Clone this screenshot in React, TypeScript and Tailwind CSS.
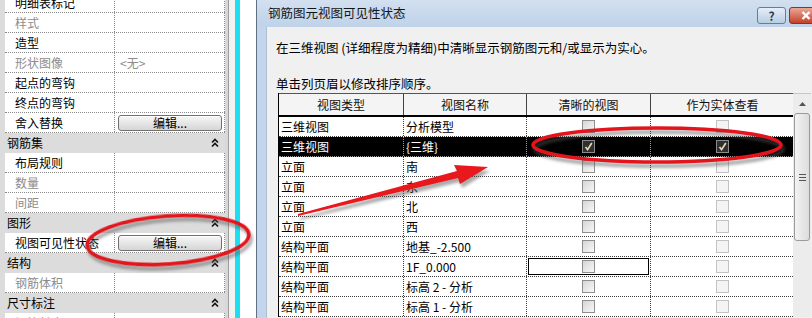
import React from 'react';

type LeftRow = { label: string; head?: boolean; gray?: boolean; value?: string; button?: boolean };

const LEFT_ROWS: LeftRow[] = [
  { label: '明细表标记' },
  { label: '样式', gray: true },
  { label: '造型' },
  { label: '形状图像', gray: true, value: '<无>' },
  { label: '起点的弯钩' },
  { label: '终点的弯钩' },
  { label: '舍入替换', button: true },
  { label: '钢筋集', head: true },
  { label: '布局规则' },
  { label: '数量', gray: true },
  { label: '间距', gray: true },
  { label: '图形', head: true },
  { label: '视图可见性状态', button: true },
  { label: '结构', head: true },
  { label: '钢筋体积', gray: true },
  { label: '尺寸标注', head: true },
  { label: '钢筋长度', gray: true },
];

const VIEWS: [string, string][] = [
  ['三维视图', '分析模型'],
  ['三维视图', '{三维}'],
  ['立面', '南'],
  ['立面', '东'],
  ['立面', '北'],
  ['立面', '西'],
  ['结构平面', '地基_-2.500'],
  ['结构平面', '1F_0.000'],
  ['结构平面', '标高 2 - 分析'],
  ['结构平面', '标高 1 - 分析'],
];

const DoubleCaret = () => (
  <svg width="8" height="10" viewBox="0 0 8 10">
    <path d="M1 4.5 L4 1.5 L7 4.5 M1 8.5 L4 5.5 L7 8.5" stroke="#111" strokeWidth="1.6" fill="none" />
  </svg>
);

const EditButton = () => (
  <div className="ml-[3px] mr-[2px] h-[16px] flex-1 rounded-[3px] border border-[#707070] bg-linear-to-b from-[#f7f7f7] to-[#d6d6d6] shadow-[inset_0_1px_0_#fff] flex items-center justify-center text-[12px] leading-none text-black">
    编辑...
  </div>
);

const Check = ({ on, dim }: { on?: boolean; dim?: boolean }) => (
  <div
    className={`w-[13px] h-[13px] border flex items-center justify-center ${
      on
        ? 'bg-[#2f2f2f] border-[#8c8c8c]'
        : dim
        ? 'bg-[#f4f4f4] border-[#c2c2c2]'
        : 'bg-linear-to-br from-[#d6d6d6] to-[#f8f8f8] border-[#8e8e8e]'
    }`}
  >
    {on && (
      <svg width="11" height="11" viewBox="0 0 11 11">
        <path d="M2.5 6 L4.6 8.6 L8.8 2" stroke="#e8d9b2" strokeWidth="1.7" fill="none" />
      </svg>
    )}
  </div>
);

const PropertiesPanel = () => (
  <div className="flex w-[240px] h-full shrink-0">
    <div className="w-[5px] bg-[#dcdcdc]" />
    <div className="w-[220px] -mt-[7px] flex flex-col">
      {LEFT_ROWS.map((r, i) =>
        r.head ? (
          <div key={i} className="h-[20px] shrink-0 bg-[#dcdcdc] flex items-center justify-between pl-[2px] pr-[6px] text-[12px] text-black">
            <span>{r.label}</span>
            <DoubleCaret />
          </div>
        ) : (
          <div key={i} className="h-[20px] shrink-0 flex border-b border-dotted border-[#8a8a8a] bg-white text-[12px]">
            <div className={`w-[110px] pl-[10px] flex items-center border-r border-dotted border-[#8a8a8a] ${r.gray ? 'text-[#8c8c8c]' : 'text-black'}`}>
              {r.label}
            </div>
            <div className="w-[110px] flex items-center border-r border-dotted border-[#8a8a8a] text-[#8c8c8c]">
              {r.button ? <EditButton /> : r.value ? <span className="pl-[5px]">{r.value}</span> : null}
            </div>
          </div>
        )
      )}
    </div>
    <div className="w-[3px] bg-[#d8d8d8]" />
    <div className="w-[1px] bg-[#9c9c9c]" />
    <div className="w-[6px] bg-[#f2f2f2]" />
    <div className="w-[5px] bg-[#1ce0f2]" />
  </div>
);

const Table = () => (
  <div className="flex">
    <div className="w-[515px] flex flex-col border-l border-black">
      <div className="grid grid-cols-[125px_123px_124px_143px] h-[24px] shrink-0 bg-[#f4f4f4] border-t border-[#555] border-b-2 border-b-black text-[12px] text-[#111]">
        {['视图类型', '视图名称', '清晰的视图', '作为实体查看'].map((h, i) => (
          <div key={h} className={`flex items-center justify-center ${i < 3 ? 'border-r border-[#444]' : ''}`}>
            {h}
          </div>
        ))}
      </div>
      {VIEWS.map(([type, name], i) => {
        const sel = i === 1;
        const line = sel ? 'border-[#9a9a9a]' : 'border-[#3a3a3a]';
        return (
          <div
            key={i}
            className={`grid grid-cols-[125px_123px_124px_143px] h-[20px] shrink-0 border-b border-dotted text-[12px] ${line} ${
              sel ? 'bg-black text-white' : 'bg-white text-black'
            }`}
          >
            <div className={`pl-[2px] flex items-center border-r border-dotted ${line}`}>{type}</div>
            <div className={`pl-[2px] flex items-center border-r border-dotted ${line}`}>{name}</div>
            <div className={`flex items-center justify-center border-r border-dotted ${line}`}>
              {i === 7 ? (
                <div className="m-[1px] w-full h-[17px] border border-black flex items-center justify-center">
                  <Check />
                </div>
              ) : (
                <Check on={sel} />
              )}
            </div>
            <div className={`flex items-center justify-center border-r border-dotted ${line}`}>
              <Check on={sel} dim={!sel} />
            </div>
          </div>
        );
      })}
    </div>
    <div className="w-[18px] flex flex-col bg-[#ececec] border-t border-[#c8c8c8]">
      <div className="h-[19px] flex items-center justify-center">
        <svg width="7" height="4" viewBox="0 0 7 4">
          <path d="M0 4 L3.5 0 L7 4 Z" fill="#555" />
        </svg>
      </div>
      <div className="mx-[1px] h-[128px] rounded-[3px] border border-[#9a9a9a] bg-linear-to-r from-[#f3f3f3] to-[#dcdcdc] flex items-center justify-center">
        <div className="flex flex-col gap-[2px]">
          <div className="w-[7px] h-[1px] bg-[#555]" />
          <div className="w-[7px] h-[1px] bg-[#555]" />
          <div className="w-[7px] h-[1px] bg-[#555]" />
        </div>
      </div>
    </div>
  </div>
);

const Dialog = () => (
  <div className="ml-[16px] w-[570px] shrink-0 h-full flex flex-col border-l border-[#5f6f84] bg-[#c3d5ea]">
    <div className="h-[27px] shrink-0 flex items-center justify-between bg-linear-to-b from-[#d2e0f0] to-[#bfd2e8] pl-[11px]">
      <span className="text-[12.5px] text-[#141414]">钢筋图元视图可见性状态</span>
      <div className="flex items-start h-full pt-[7px] gap-[3px] pr-[4px]">
        <div className="w-[29px] h-[17px] rounded-[3px] border border-[#6a7d93] bg-linear-to-b from-[#e6eef7] to-[#b9cde3] flex items-center justify-center text-[12px] font-bold leading-none text-[#2b3d52]">
          ?
        </div>
        <div className="w-[33px] h-[17px] rounded-[3px] border border-[#7a3a2c] bg-linear-to-b from-[#e9a796] to-[#c23f27] flex items-center justify-center">
          <svg width="10" height="9" viewBox="0 0 10 9">
            <path d="M1.5 1 L8.5 8 M8.5 1 L1.5 8" stroke="#fff" strokeWidth="2.4" />
          </svg>
        </div>
      </div>
    </div>
    <div className="ml-[9px] flex-1 bg-[#f0f0f0] border-l border-[#aebfd2] flex flex-col text-[12.5px] text-black">
      <div className="pl-[9px] mt-[13px] h-[16px] leading-[16px]">在三维视图 (详细程度为精细)中清晰显示钢筋图元和/或显示为实心。</div>
      <div className="pl-[9px] mt-[20px] h-[16px] leading-[16px]">单击列页眉以修改排序顺序。</div>
      <div className="pl-[11px] mt-[1px]">
        <Table />
      </div>
    </div>
  </div>
);

const Annotations = () => (
  <svg className="absolute inset-0 pointer-events-none" width="812" height="318" viewBox="0 0 812 318">
    <defs>
      <filter id="blur" x="-20%" y="-60%" width="140%" height="220%">
        <feGaussianBlur stdDeviation="1.6" />
      </filter>
    </defs>
    <g opacity="0.5" filter="url(#blur)" transform="translate(2 4)">
      <ellipse cx="168" cy="240" rx="81" ry="24" transform="rotate(-4 168 240)" fill="none" stroke="#555" strokeWidth="4" />
      <ellipse cx="657" cy="145" rx="124" ry="17" fill="none" stroke="#555" strokeWidth="4" />
      <polygon points="298,214 457,171 454,165 488,167 460,184 458,178 298,216" fill="#555" />
    </g>
    <ellipse cx="168" cy="240" rx="81" ry="24" transform="rotate(-4 168 240)" fill="none" stroke="#e3141b" strokeWidth="3.6" />
    <ellipse cx="657" cy="145" rx="124" ry="17" fill="none" stroke="#e3141b" strokeWidth="3.6" />
    <polygon points="298,214 457,171 454,165 488,167 460,184 458,178 298,216" fill="#e8181c" />
  </svg>
);

export default function App() {
  return (
    <div className="relative w-[812px] h-[318px] overflow-hidden bg-white flex font-['Noto_Sans_CJK_SC','Liberation_Sans',sans-serif] leading-none">
      <PropertiesPanel />
      <Dialog />
      <Annotations />
    </div>
  );
}
